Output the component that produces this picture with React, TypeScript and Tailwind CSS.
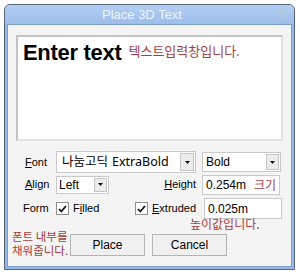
import React from 'react';

const ui = "font-['Liberation_Sans',Arial,sans-serif]";
const kr = "font-['Noto_Sans_CJK_KR','Noto_Sans',sans-serif]";

const Arrow: React.FC<{ className?: string }> = ({ className }) => (
  <div className={`flex items-center justify-center bg-[#ececec] border border-[#c6c6c6] ${className ?? ''}`}>
    <svg width="5" height="3" viewBox="0 0 5 3">
      <path d="M0 0H5L2.5 3Z" fill="#111" />
    </svg>
  </div>
);

const Check: React.FC = () => (
  <div className="w-[13px] h-[13px] bg-white border border-[#8f8f8f] flex items-center justify-center">
    <svg width="9" height="8" viewBox="0 0 9 8">
      <path d="M1 4 L3.3 6.5 L8 1" fill="none" stroke="#111" strokeWidth="1.8" />
    </svg>
  </div>
);

const App: React.FC = () => {
  return (
    <div className={`w-[300px] h-[276px] bg-white pt-[4px] pl-[4px] ${ui}`}>
      <div className="relative w-[291px] h-[266px] rounded-t-[6px] border border-[#56657a] bg-[#95b8e6] flex flex-col">
        {/* title bar */}
        <div className="h-[19px] rounded-t-[5px] bg-gradient-to-b from-[#b2cff5] to-[#9dbee9] flex items-center relative">
          <span className="ml-[97px] text-[13px] leading-none text-[#eef3fb] [text-shadow:0_0_3px_#a9c6ee]">
            Place 3D Text
          </span>
          <span className="absolute right-[6px] top-[2px] text-[14px] leading-none text-[#b9c4d3]">✕</span>
        </div>

        {/* client area */}
        <div className="relative flex-1 mx-[2px] mb-[2px] bg-[#f4f4f4] border border-[#7f9cc6] text-[11px] text-black">
          <div className="ml-[8px] mt-[10px] w-[267px] h-[106px] bg-white border-2 border-t-[#c3c3c3] border-l-[#c3c3c3] border-r-[#e2e2e2] border-b-[#e2e2e2] px-[5px] pt-[3px] flex items-start">
            <span className="text-[22px] font-bold leading-[26px] tracking-[-0.3px]">Enter text</span>
            <span className={`${kr} ml-[7px] mt-[3px] text-[13px] leading-[16px] text-[#a53d3d]`}>텍스트입력창입니다.</span>
          </div>

          {/* font row */}
          <div className="flex items-center mt-[10px] h-[22px]">
            <span className="ml-[17px] w-[31px]"><u>F</u>ont</span>
            <div className="w-[140px] h-[22px] bg-white border border-[#c9c9c9] flex items-center justify-between pr-[1px]">
              <span className="ml-[5px] flex items-baseline">
                <span className={`${kr} text-[12.5px]`}>나눔고딕</span>
                <span className="ml-[4px] font-['Noto_Sans',sans-serif] text-[12.5px]">ExtraBold</span>
              </span>
              <Arrow className="w-[14px] h-[18px]" />
            </div>
            <div className="ml-[6px] w-[79px] h-[20px] bg-white border border-[#c9c9c9] flex items-center justify-between pr-[1px]">
              <span className="ml-[3px] text-[12px]">Bold</span>
              <Arrow className="w-[13px] h-[16px]" />
            </div>
          </div>

          {/* align row */}
          <div className="flex items-center mt-[2px] h-[19px]">
            <span className="ml-[17px] w-[31px]"><u>A</u>lign</span>
            <div className="w-[53px] h-[18px] bg-white border border-[#c9c9c9] flex items-center justify-between pr-[1px]">
              <span className="ml-[2px] text-[12px]">Left</span>
              <Arrow className="w-[13px] h-[14px]" />
            </div>
            <span className="w-[87px] text-right"><u>H</u>eight</span>
            <div className="ml-[6px] w-[78px] h-[20px] bg-white border border-[#c9c9c9] flex items-center">
              <span className="ml-[3px] text-[12px]">0.254m</span>
              <span className={`${kr} ml-[8px] text-[12px] text-[#a53d3d]`}>크기</span>
            </div>
          </div>

          {/* form row */}
          <div className="flex items-center mt-[4px] h-[21px]">
            <span className="ml-[15px] w-[33px]">Form</span>
            <Check />
            <span className="ml-[4px] w-[62px]">F<u>i</u>lled</span>
            <Check />
            <span className="ml-[4px] w-[52px]"><u>E</u>xtruded</span>
            <div className="w-[78px] h-[21px] bg-white border border-[#c9c9c9] flex items-center">
              <span className="ml-[3px] text-[12px]">0.025m</span>
            </div>
          </div>

          {/* buttons */}
          <div className="flex mt-[15px] ml-[62px] gap-[7px]">
            <button className="w-[75px] h-[22px] bg-[#f0f0f0] border border-[#b4b4b4] text-[12px]">Place</button>
            <button className="w-[75px] h-[22px] bg-[#f0f0f0] border border-[#b4b4b4] text-[12px]">Cancel</button>
          </div>

          {/* annotations */}
          <span className={`${kr} absolute left-[182px] top-[193px] text-[12px] leading-none text-[#a53d3d]`}>
            높이값입니다.
          </span>
          <span className={`${kr} absolute left-[4px] top-[204px] text-[11.5px] leading-[14px] text-[#a53d3d]`}>
            폰트 내부를<br />채워줍니다.
          </span>
        </div>
      </div>
    </div>
  );
};

export default App;
